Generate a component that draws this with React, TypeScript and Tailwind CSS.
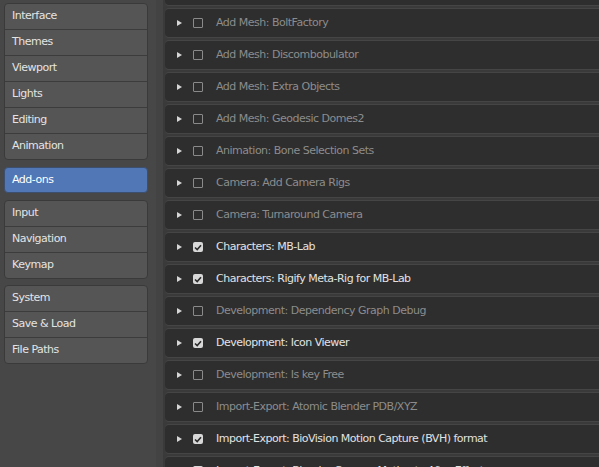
import React from 'react';

type Addon = { name: string; on: boolean };

const addons: Addon[] = [
  { name: '', on: false },
  { name: 'Add Mesh: BoltFactory', on: false },
  { name: 'Add Mesh: Discombobulator', on: false },
  { name: 'Add Mesh: Extra Objects', on: false },
  { name: 'Add Mesh: Geodesic Domes2', on: false },
  { name: 'Animation: Bone Selection Sets', on: false },
  { name: 'Camera: Add Camera Rigs', on: false },
  { name: 'Camera: Turnaround Camera', on: false },
  { name: 'Characters: MB-Lab', on: true },
  { name: 'Characters: Rigify Meta-Rig for MB-Lab', on: true },
  { name: 'Development: Dependency Graph Debug', on: false },
  { name: 'Development: Icon Viewer', on: true },
  { name: 'Development: Is key Free', on: false },
  { name: 'Import-Export: Atomic Blender PDB/XYZ', on: false },
  { name: 'Import-Export: BioVision Motion Capture (BVH) format', on: true },
  { name: 'Import-Export: Blender Camera Motion to After Effects', on: true },
];

const groups = [
  ['Interface', 'Themes', 'Viewport', 'Lights', 'Editing', 'Animation'],
  ['Input', 'Navigation', 'Keymap'],
  ['System', 'Save & Load', 'File Paths'],
];

const NavGroup: React.FC<{ items: string[] }> = ({ items }) => (
  <div className="rounded-[4px] border border-[#3a3a3a] bg-[#555555] overflow-hidden">
    {items.map((label, i) => (
      <div
        key={label}
        className={`flex items-center pl-[7px] text-[11px] tracking-[-0.5px] text-[#e4e4e4] ${i > 0 ? 'h-[26px] border-t border-[#3c3c3c]' : 'h-[25px]'}`}
      >
        {label}
      </div>
    ))}
  </div>
);

const Row: React.FC<{ addon: Addon }> = ({ addon }) => (
  <div className="h-[28px] shrink-0 flex items-center rounded-[4px] bg-[#2e2e2e] shadow-[0_1px_0_#454545,0_-1px_0_#454545]">
    <svg width="5" height="6" viewBox="0 0 5 6" className="ml-[12px]">
      <path d="M0 0 L5 3 L0 6 Z" fill="#d6d6d6" />
    </svg>
    {addon.on ? (
      <div className="ml-[11px] w-[10px] h-[10px] rounded-[2px] bg-[#d8d8d8] flex items-center justify-center">
        <svg width="8" height="7" viewBox="0 0 8 7">
          <path d="M1 3.5 L3.2 5.6 L7 1.2" stroke="#2b2b2b" strokeWidth="1.6" fill="none" />
        </svg>
      </div>
    ) : (
      <div className="ml-[11px] w-[10px] h-[10px] rounded-[1px] border border-[#8a8a8a]" />
    )}
    <span className={`ml-[13px] whitespace-nowrap text-[11px] tracking-[-0.5px] ${addon.on ? 'text-[#e2e2e2]' : 'text-[#8c8c8c]'}`}>
      {addon.name}
    </span>
  </div>
);

export default function App() {
  return (
    <div
      className="w-[599px] h-[467px] overflow-hidden flex bg-[#474747]"
      style={{ fontFamily: '"DejaVu Sans", "Liberation Sans", sans-serif' }}
    >
      <div className="w-[156px] shrink-0 pl-[4px] pr-[8px] pt-[3px] flex flex-col">
        <NavGroup items={groups[0]} />
        <div className="mt-[7px] h-[26px] rounded-[4px] bg-[#5177b6] border border-[#3d4f6e] flex items-center pl-[7px] text-[11px] tracking-[-0.5px] text-white">
          Add-ons
        </div>
        <div className="mt-[7px]">
          <NavGroup items={groups[1]} />
        </div>
        <div className="mt-[6px]">
          <NavGroup items={groups[2]} />
        </div>
      </div>
      <div className="w-[7px] shrink-0 bg-[#434343]" />
      <div className="flex-1 bg-[#3a3a3a] pl-[2px] overflow-hidden">
        <div className="-mt-[23px] flex flex-col gap-[4px] w-[460px]">
          {addons.map((a, i) => (
            <Row key={i} addon={a} />
          ))}
        </div>
      </div>
    </div>
  );
}
